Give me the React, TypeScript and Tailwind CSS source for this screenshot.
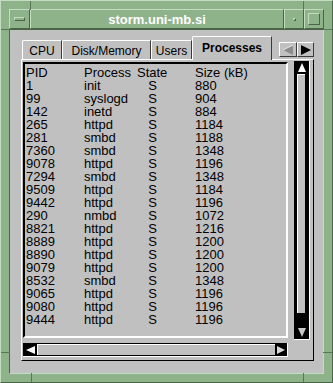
const rows: Array<[string, string, string, string]> = [
  ["1", "init", "S", "880"],
  ["99", "syslogd", "S", "904"],
  ["142", "inetd", "S", "884"],
  ["265", "httpd", "S", "1184"],
  ["281", "smbd", "S", "1188"],
  ["7360", "smbd", "S", "1348"],
  ["9078", "httpd", "S", "1196"],
  ["7294", "smbd", "S", "1348"],
  ["9509", "httpd", "S", "1184"],
  ["9442", "httpd", "S", "1196"],
  ["290", "nmbd", "S", "1072"],
  ["8821", "httpd", "S", "1216"],
  ["8889", "httpd", "S", "1200"],
  ["8890", "httpd", "S", "1200"],
  ["9079", "httpd", "S", "1200"],
  ["8532", "smbd", "S", "1348"],
  ["9065", "httpd", "S", "1196"],
  ["9080", "httpd", "S", "1196"],
  ["9444", "httpd", "S", "1196"],
];

const tabs = [
  { label: "CPU", w: "w-[40px]" },
  { label: "Disk/Memory", w: "w-[89px]" },
  { label: "Users", w: "w-[41px]" },
];

function Notch({ className }: { className: string }) {
  return <div className={"absolute bg-[#5a7757] " + className} />;
}

export default function App() {
  return (
    <div
      className="relative flex h-[383px] w-[333px] flex-col border-t border-l border-b border-r border-t-[#c4dcc0] border-l-[#c4dcc0] border-b-[#4a6647] border-r-[#4a6647] bg-[#8eb38a] p-[8px]"
      style={{ fontFamily: '"Liberation Sans", Arial, sans-serif' }}
    >
      {/* frame notches */}
      <Notch className="left-[29px] top-0 h-[9px] w-[1px]" />
      <Notch className="left-[302px] top-0 h-[9px] w-[1px]" />
      <Notch className="left-0 top-[28px] h-[1px] w-[9px]" />
      <Notch className="right-0 top-[28px] h-[1px] w-[9px]" />
      <Notch className="left-0 top-[351px] h-[1px] w-[9px]" />
      <Notch className="right-0 top-[351px] h-[1px] w-[9px]" />
      <Notch className="bottom-0 left-[30px] h-[9px] w-[1px]" />
      <Notch className="bottom-0 left-[302px] h-[9px] w-[1px]" />

      {/* title bar */}
      <div className="flex h-[20px] shrink-0">
        <div className="flex w-[21px] items-center justify-center border-t border-l border-b border-r border-t-[#c4dcc0] border-l-[#c4dcc0] border-b-[#4a6647] border-r-[#4a6647]">
          <div className="h-[4px] w-[11px] border-t border-l border-b border-r border-t-[#c4dcc0] border-l-[#c4dcc0] border-b-[#4a6647] border-r-[#4a6647]" />
        </div>
        <div className="flex flex-1 items-center justify-center border-t border-l border-b border-r border-t-[#c4dcc0] border-l-[#c4dcc0] border-b-[#4a6647] border-r-[#4a6647] text-[13px] font-bold leading-none text-white">
          storm.uni-mb.si
        </div>
        <div className="flex w-[20px] items-center justify-center border-t border-l border-b border-r border-t-[#c4dcc0] border-l-[#c4dcc0] border-b-[#4a6647] border-r-[#4a6647]">
          <div className="h-[3px] w-[3px] border-t border-l border-b border-r border-t-[#c4dcc0] border-l-[#c4dcc0] border-b-[#4a6647] border-r-[#4a6647]" />
        </div>
        <div className="flex w-[20px] items-center justify-center border-t border-l border-b border-r border-t-[#c4dcc0] border-l-[#c4dcc0] border-b-[#4a6647] border-r-[#4a6647]">
          <div className="h-[12px] w-[12px] border-t border-l border-b border-r border-t-[#c4dcc0] border-l-[#c4dcc0] border-b-[#4a6647] border-r-[#4a6647]" />
        </div>
      </div>

      {/* client area */}
      <div className="flex flex-1 flex-col border-t border-l border-b border-r border-t-[#4a6647] border-l-[#4a6647] border-b-[#c4dcc0] border-r-[#c4dcc0] bg-[#c0c0c0] pl-[11px] pr-[9px] pt-[6px]">
        {/* tabs */}
        <div className="relative z-10 flex h-[23px] items-end text-[12px] leading-none text-black">
          <div className="w-[1px]" />
          {tabs.map((t) => (
            <div
              key={t.label}
              className={
                t.w +
                " flex h-[19px] items-center justify-center rounded-tl-[2px] border-t border-l border-r border-t-white border-l-white border-r-[#3a3a3a] pt-[1px]"
              }
            >
              {t.label}
            </div>
          ))}
          <div className="-mb-[1px] flex h-[24px] w-[80px] items-center justify-center rounded-tl-[2px] border-t border-l border-r border-t-white border-l-white border-r-[#3a3a3a] bg-[#c0c0c0] pb-[2px] font-bold">
            Processes
          </div>
          <div className="ml-auto flex self-start pt-[6px]">
            <div className="flex h-[15px] w-[18px] items-center justify-center border-t border-l border-b border-r border-t-white border-l-white border-b-[#3a3a3a] border-r-[#3a3a3a]">
              <svg width="12" height="10" viewBox="0 0 12 10">
                <polygon points="11,0 11,10 1,5" fill="#8c8c8c" />
                <line x1="1" y1="5" x2="11" y2="0" stroke="#e8e8e8" strokeWidth="1" />
              </svg>
            </div>
            <div className="flex h-[15px] w-[17px] items-center justify-center border-t border-l border-b border-r border-t-white border-l-white border-b-[#3a3a3a] border-r-[#3a3a3a]">
              <svg width="12" height="10" viewBox="0 0 12 10">
                <polygon points="1,0 1,10 11,5" fill="#000" />
              </svg>
            </div>
          </div>
        </div>

        {/* panel */}
        <div className="flex h-[302px] border-t border-l border-b border-r border-t-white border-l-white border-b-black border-r-black pl-[1px] pt-[2px]">
          <div className="flex w-[265px] flex-col">
            <div className="h-[276px] overflow-hidden border-t-2 border-l-2 border-b-2 border-r-2 border-t-black border-l-black border-b-white border-r-white pl-[1px] pt-[2px] text-[13px] leading-[13px] text-black">
              <div className="grid auto-rows-[13px] grid-cols-[58px_53px_31px_1fr]">
                <div>PID</div>
                <div>Process</div>
                <div>State</div>
                <div className="pl-[27px]">Size (kB)</div>
                {rows.map((r) => [
                  <div key={r[0] + "a"}>{r[0]}</div>,
                  <div key={r[0] + "b"}>{r[1]}</div>,
                  <div key={r[0] + "c"} className="text-center">
                    {r[2]}
                  </div>,
                  <div key={r[0] + "d"} className="pl-[27px]">
                    {r[3]}
                  </div>,
                ])}
              </div>
            </div>
            {/* horizontal scrollbar */}
            <div className="mt-[5px] flex h-[14px] border-b border-r border-b-white border-r-white bg-black">
              <div className="flex w-[14px] items-center justify-center">
                <svg width="9" height="8" viewBox="0 0 9 8">
                  <polygon points="9,0 9,8 0,4" fill="#fff" />
                </svg>
              </div>
              <div className="my-[1px] flex-1 border-t border-l border-t-white border-l-white bg-[#c0c0c0]" />
              <div className="flex w-[12px] items-center justify-center">
                <svg width="8" height="8" viewBox="0 0 8 8">
                  <polygon points="0,0 0,8 8,4" fill="#d8d8d8" />
                </svg>
              </div>
            </div>
          </div>
          {/* vertical scrollbar */}
          <div className="-mt-[1px] ml-[6px] flex h-[279px] w-[16px] flex-col border-b border-r border-b-white border-r-white bg-black">
            <div className="flex h-[13px] items-center justify-center">
              <svg width="8" height="9" viewBox="0 0 8 9">
                <polygon points="0,9 8,9 4,0" fill="#fff" />
              </svg>
            </div>
            <div className="ml-[3px] mr-[4px] h-[239px] border-t border-l border-t-white border-l-white bg-[#c0c0c0]" />
            <div className="flex-1" />
            <div className="flex h-[14px] items-center justify-center">
              <svg width="8" height="9" viewBox="0 0 8 9">
                <polygon points="0,0 8,0 4,9" fill="#c8c8c8" />
              </svg>
            </div>
          </div>
        </div>
      </div>
    </div>
  );
}
